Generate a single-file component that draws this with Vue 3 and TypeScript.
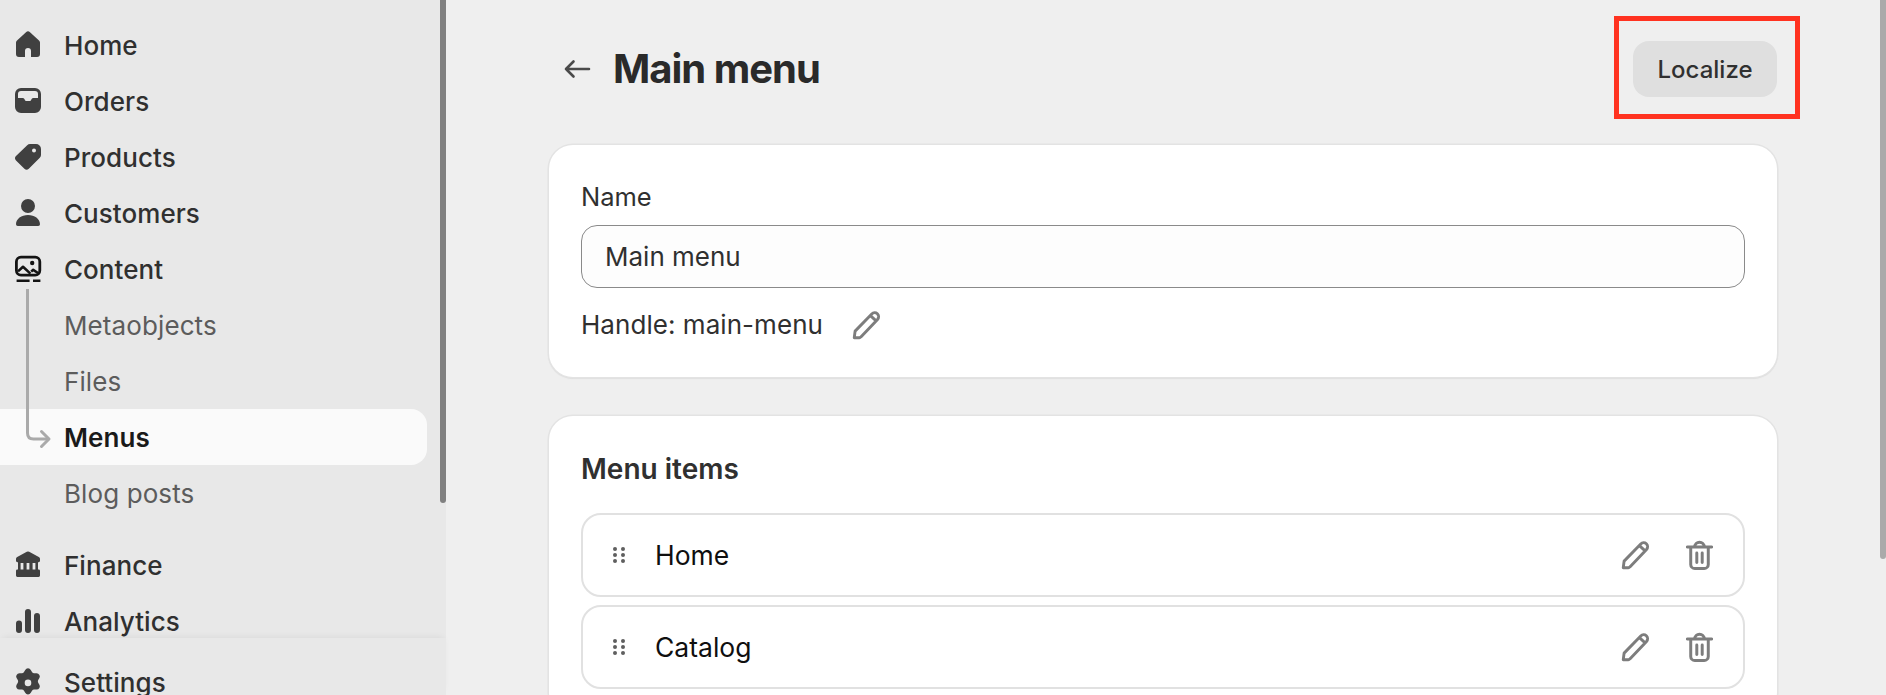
<script setup lang="ts">
interface NavRow { label: string; icon?: string; sub?: boolean; active?: boolean; dark?: boolean; gapBefore?: boolean }
const rows: NavRow[] = [
  { label: 'Home', icon: 'home' },
  { label: 'Orders', icon: 'orders' },
  { label: 'Products', icon: 'tag' },
  { label: 'Customers', icon: 'person' },
  { label: 'Content', icon: 'content', dark: true },
  { label: 'Metaobjects', sub: true },
  { label: 'Files', sub: true },
  { label: 'Menus', sub: true, active: true },
  { label: 'Blog posts', sub: true },
  { label: 'Finance', icon: 'bank', gapBefore: true },
  { label: 'Analytics', icon: 'bars' },
]
const paths: Record<string, string> = {
  home: 'M9 3.6a1.5 1.5 0 0 1 2 0l4.5 4.1a1.5 1.5 0 0 1 .5 1.1v5.700a1.500 1.500 0 0 1-1.500 1.500h-3V13a1.500 1.500 0 0 0-3 0v3h-3A1.500 1.500 0 0 1 4 14.500V8.800a1.500 1.500 0 0 1 .5-1.100z',
  orders: 'M3.500 6.500a3 3 0 0 1 3-3h7a3 3 0 0 1 3 3V13a3 3 0 0 1-3 3h-7a3 3 0 0 1-3-3zM5 8.500v-2A1.500 1.500 0 0 1 6.500 5h7A1.500 1.500 0 0 1 15 6.500v2h-2.300a1 1 0 0 0-.9.550l-.3.6a.6.6 0 0 1-.5.350H9a.6.6 0 0 1-.5-.350l-.3-.6a1 1 0 0 0-.9-.550z',
  tag: 'M11 3.500h3A2.500 2.500 0 0 1 16.500 6v3a2 2 0 0 1-.6 1.400l-5.500 5.500a1.600 1.600 0 0 1-2.200 0L4 11.700a1.600 1.600 0 0 1 0-2.200l5.600-5.400A2 2 0 0 1 11 3.500zM13 5.800a1 1 0 1 0 0 2 1 1 0 0 0 0-2z',
  person: 'M10 3a3.500 3.500 0 1 1 0 7 3.500 3.500 0 0 1 0-7zM4 15.600C4 12.900 6.700 11 10 11s6 1.900 6 4.600a.9.9 0 0 1-.9.9H4.900a.9.9 0 0 1-.9-.9z',
  bank: 'M9.400 3.400a1.400 1.400 0 0 1 1.200 0l4.800 2.600a1 1 0 0 1 .6.9v1a.7.7 0 0 1-.7.7H15v3.600h.3a.7.7 0 0 1 .7.7v2.400a.7.7 0 0 1-.7.7H4.700a.7.7 0 0 1-.7-.7v-2.400a.7.7 0 0 1 .7-.7H5V8.600h-.3a.7.7 0 0 1-.7-.7v-1a1 1 0 0 1 .6-.9zM6.300 9h1.400v3.200H6.300zM9.300 9h1.400v3.200H9.300zM12.300 9h1.400v3.200h-1.400z',
  bars: 'M5.500 9.700A1.500 1.500 0 0 1 7 11.200v3.300a1.500 1.500 0 0 1-3 0v-3.300a1.500 1.500 0 0 1 1.500-1.500zM10 4a1.500 1.500 0 0 1 1.500 1.500v9a1.500 1.500 0 0 1-3 0v-9A1.500 1.500 0 0 1 10 4zM14.500 6a1.500 1.500 0 0 1 1.500 1.500v7a1.500 1.500 0 0 1-3 0v-7A1.500 1.500 0 0 1 14.500 6z',
  gear: 'M8.600 4a1.600 1.600 0 0 1 2.800 0l.6 1a1.300 1.300 0 0 0 1.100.650h1.200a1.600 1.600 0 0 1 1.400 2.400l-.6 1a1.300 1.300 0 0 0 0 1.300l.6 1a1.600 1.600 0 0 1-1.400 2.400h-1.200a1.300 1.300 0 0 0-1.100.650l-.6 1a1.600 1.600 0 0 1-2.800 0l-.6-1a1.300 1.300 0 0 0-1.100-.650H5.700a1.600 1.600 0 0 1-1.400-2.400l.6-1a1.300 1.300 0 0 0 0-1.300l-.6-1a1.600 1.600 0 0 1 1.400-2.400h1.200A1.300 1.300 0 0 0 8 5zM10 8.800a1.650 1.650 0 1 0 0 3.300 1.650 1.650 0 0 0 0-3.300z',
}
const items: string[] = ['Home', 'Catalog']
</script>

<template>
  <div class="page">
    <aside class="sidebar">
      <nav class="nav">
        <div
          v-for="row in rows"
          :key="row.label"
          class="row"
          :class="{ sub: row.sub, active: row.active, spaced: row.gapBefore }"
        >
          <span class="icon-slot">
            <svg v-if="row.icon === 'content'" class="nav-icon dark" viewBox="0 0 20 20" fill="none" stroke="currentColor">
              <rect x="4.200" y="4.100" width="11.700" height="9" rx="2.300" stroke-width="1.400" />
              <path d="M5 11.200 7.500 8.900l3.700 3.400M11.600 11.300l1-.9 2.400 1.600" stroke-width="1.300" stroke-linejoin="round" />
              <circle cx="12.100" cy="7" r="1.100" fill="currentColor" stroke="none" />
              <path d="M4.300 15.900h6.500M12.500 15.900h3.700" stroke-width="1.200" />
            </svg>
            <svg v-else-if="row.icon" class="nav-icon" viewBox="0 0 20 20">
              <path :d="paths[row.icon]" fill="currentColor" fill-rule="evenodd" />
            </svg>
          </span>
          <span class="row-label">{{ row.label }}</span>
        </div>
        <svg class="tree" width="34" height="170" viewBox="0 0 34 170" fill="none" stroke="#aaaaaa" stroke-width="3" stroke-linecap="round">
          <path d="M9.500 1V145q0 6 6 6H30" stroke-linecap="butt" />
          <path d="M23.500 143.500 31 151 23.500 158.500" stroke-linejoin="round" />
        </svg>
        <span class="side-thumb"></span>
      </nav>
      <footer class="side-foot">
        <div class="row">
          <span class="icon-slot">
            <svg class="nav-icon" viewBox="0 0 20 20"><path :d="paths.gear" fill="currentColor" fill-rule="evenodd" /></svg>
          </span>
          <span class="row-label">Settings</span>
        </div>
      </footer>
    </aside>

    <main class="main">
      <header class="head">
        <div class="title-wrap">
          <svg class="back" viewBox="0 0 28 24" fill="none" stroke="#4a4a4a" stroke-width="2.600" stroke-linecap="round" stroke-linejoin="round">
            <path d="M26 12H3M10.500 4.500 3 12l7.500 7.500" />
          </svg>
          <h1>Main menu</h1>
        </div>
        <button class="localize">Localize</button>
        <span class="callout"></span>
      </header>

      <section class="card first">
        <div class="label">Name</div>
        <div class="input">Main menu</div>
        <div class="handle">
          <span>Handle: main-menu</span>
          <svg class="edit" viewBox="0 0 20 20" fill="none" stroke="#7d7d7d" stroke-width="1.700" stroke-linejoin="round">
            <path d="M2.500 17.500 3 13.600 12.800 3.500a2.300 2.300 0 0 1 3.400 3.200L6.400 17a1.500 1.500 0 0 1-1 .5zM12 4.500l3.700 3.400" />
          </svg>
        </div>
      </section>

      <section class="card second">
        <h2>Menu items</h2>
        <div class="list">
          <div v-for="item in items" :key="item" class="item">
            <svg class="drag" viewBox="0 0 12 16" fill="#5f5f5f">
              <circle cx="2" cy="2" r="2" /><circle cx="10" cy="2" r="2" />
              <circle cx="2" cy="8" r="2" /><circle cx="10" cy="8" r="2" />
              <circle cx="2" cy="14" r="2" /><circle cx="10" cy="14" r="2" />
            </svg>
            <span class="item-name">{{ item }}</span>
            <svg class="edit" viewBox="0 0 20 20" fill="none" stroke="#7d7d7d" stroke-width="1.700" stroke-linejoin="round">
              <path d="M2.500 17.500 3 13.600 12.800 3.500a2.300 2.300 0 0 1 3.400 3.200L6.400 17a1.500 1.500 0 0 1-1 .5zM12 4.500l3.700 3.400" />
            </svg>
            <svg class="trash" viewBox="0 0 20 22" fill="none" stroke="#7d7d7d" stroke-width="2.200" stroke-linecap="round" stroke-linejoin="round">
              <path d="M1 5h18M3.500 5v13a3 3 0 0 0 3 3h7a3 3 0 0 0 3-3V5M6.500 5a3.500 3.500 0 0 1 7 0M8 9.500v7M12 9.500v7" />
            </svg>
          </div>
        </div>
      </section>
      <span class="main-thumb"></span>
    </main>
  </div>
</template>

<style>
html, body { margin: 0; overflow: hidden; }
</style>

<style scoped>
.page {
  display: flex;
  width: 1886px;
  height: 695px;
  overflow: hidden;
  font-family: Inter, "Liberation Sans", sans-serif;
  background: #efefef;
  color: #303030;
}
.sidebar {
  width: 446px;
  flex: none;
  height: 695px;
  display: flex;
  flex-direction: column;
  background: #e8e8e8;
}
.nav {
  flex: 1;
  min-height: 0;
  position: relative;
  overflow: hidden;
  padding-top: 17px;
  box-sizing: border-box;
}
.row {
  width: 427px;
  height: 56px;
  display: flex;
  align-items: center;
  padding-left: 8px;
  box-sizing: border-box;
  font-size: 26px;
  font-weight: 500;
  letter-spacing: 0.05px;
  color: #303030;
  border-radius: 0 16px 16px 0;
}
.row.spaced { margin-top: 16px; }
.row.sub { color: #5c5c5c; font-weight: 400; letter-spacing: 0.1px; }
.row.active { background: #fafafa; color: #1a1a1a; font-weight: 600; }
.icon-slot { width: 40px; height: 40px; flex: none; margin-right: 17px; }
.row-label { margin-left: -1px; }
.nav-icon { display: block; width: 40px; height: 40px; color: #404040; }
.nav-icon.dark { color: #141414; }
.tree { position: absolute; left: 18px; top: 288px; }
.side-thumb {
  position: absolute;
  left: 440px;
  top: 0;
  width: 6px;
  height: 503px;
  border-radius: 0 0 3px 3px;
  background: #808080;
}
.side-foot {
  height: 57px;
  flex: none;
  padding-top: 16px;
  box-sizing: border-box;
  overflow: hidden;
  background: #e8e8e8;
  box-shadow: 0 -3px 7px -3px rgba(0, 0, 0, 0.08);
  position: relative;
}
.main { flex: 1; position: relative; padding: 41px 108px 0 102px; }
.head {
  position: relative;
  height: 56px;
  margin-bottom: 48px;
  padding-right: 1px;
  display: flex;
  align-items: center;
  justify-content: space-between;
}
.title-wrap { display: flex; align-items: center; }
.back { width: 28px; height: 24px; margin-left: 15px; margin-right: 22px; }
h1 { margin: 0; font-size: 40px; font-weight: 700; color: #2a2a2a; letter-spacing: -1px; line-height: 56px; }
.localize {
  width: 144px;
  height: 56px;
  border: 0;
  padding: 0;
  border-radius: 16px;
  background: #dfdfdf;
  font: 500 24px Inter, "Liberation Sans", sans-serif;
  color: #303030;
}
.callout {
  position: absolute;
  left: 1066px;
  top: -25px;
  width: 186px;
  height: 103px;
  border: 5px solid #ff3220;
  box-sizing: border-box;
}
.card {
  background: #fff;
  border-radius: 24px;
  margin: 0 1px 39px;
  box-shadow: 0 0 0 1.500px #e3e3e3, 0 1px 1px 1px #dcdcdc;
  box-sizing: border-box;
}
.card.first { height: 232px; padding: 37px 32px 0; }
.card.second { height: 300px; padding: 35px 32px 0; }
.label { font-size: 25.500px; line-height: 30px; color: #303030; font-weight: 400; margin-bottom: 13px; }
.input {
  height: 63px;
  box-sizing: border-box;
  border: 1px solid #8a8a8a;
  border-radius: 16px;
  background: #fdfdfd;
  padding-left: 23px;
  display: flex;
  align-items: center;
  font-size: 26px;
  color: #303030;
}
.handle { display: flex; align-items: center; margin-top: 20px; font-size: 26px; line-height: 34px; letter-spacing: 0.05px; color: #303030; }
.edit { width: 34px; height: 34px; margin-left: 27px; flex: none; }
h2 { margin: 0 0 26px; font-size: 28px; font-weight: 600; line-height: 36px; color: #303030; }
.list { display: flex; flex-direction: column; gap: 8px; }
.item {
  height: 84px;
  box-sizing: border-box;
  border: 2px solid #e1e1e1;
  border-radius: 20px;
  display: flex;
  align-items: center;
  padding-left: 30px;
  padding-right: 30px;
}
.drag { width: 12px; height: 16px; flex: none; margin-right: 30px; }
.item-name { flex: 1; font-size: 26.500px; color: #0f0f0f; }
.item .edit { margin-left: 0; margin-right: 33px; }
.trash { width: 27px; height: 30px; flex: none; }
.main-thumb {
  position: absolute;
  right: 0;
  top: 0;
  width: 6px;
  height: 559px;
  background: #aaaaaa;
  border-radius: 0 0 3px 3px;
}
</style>
